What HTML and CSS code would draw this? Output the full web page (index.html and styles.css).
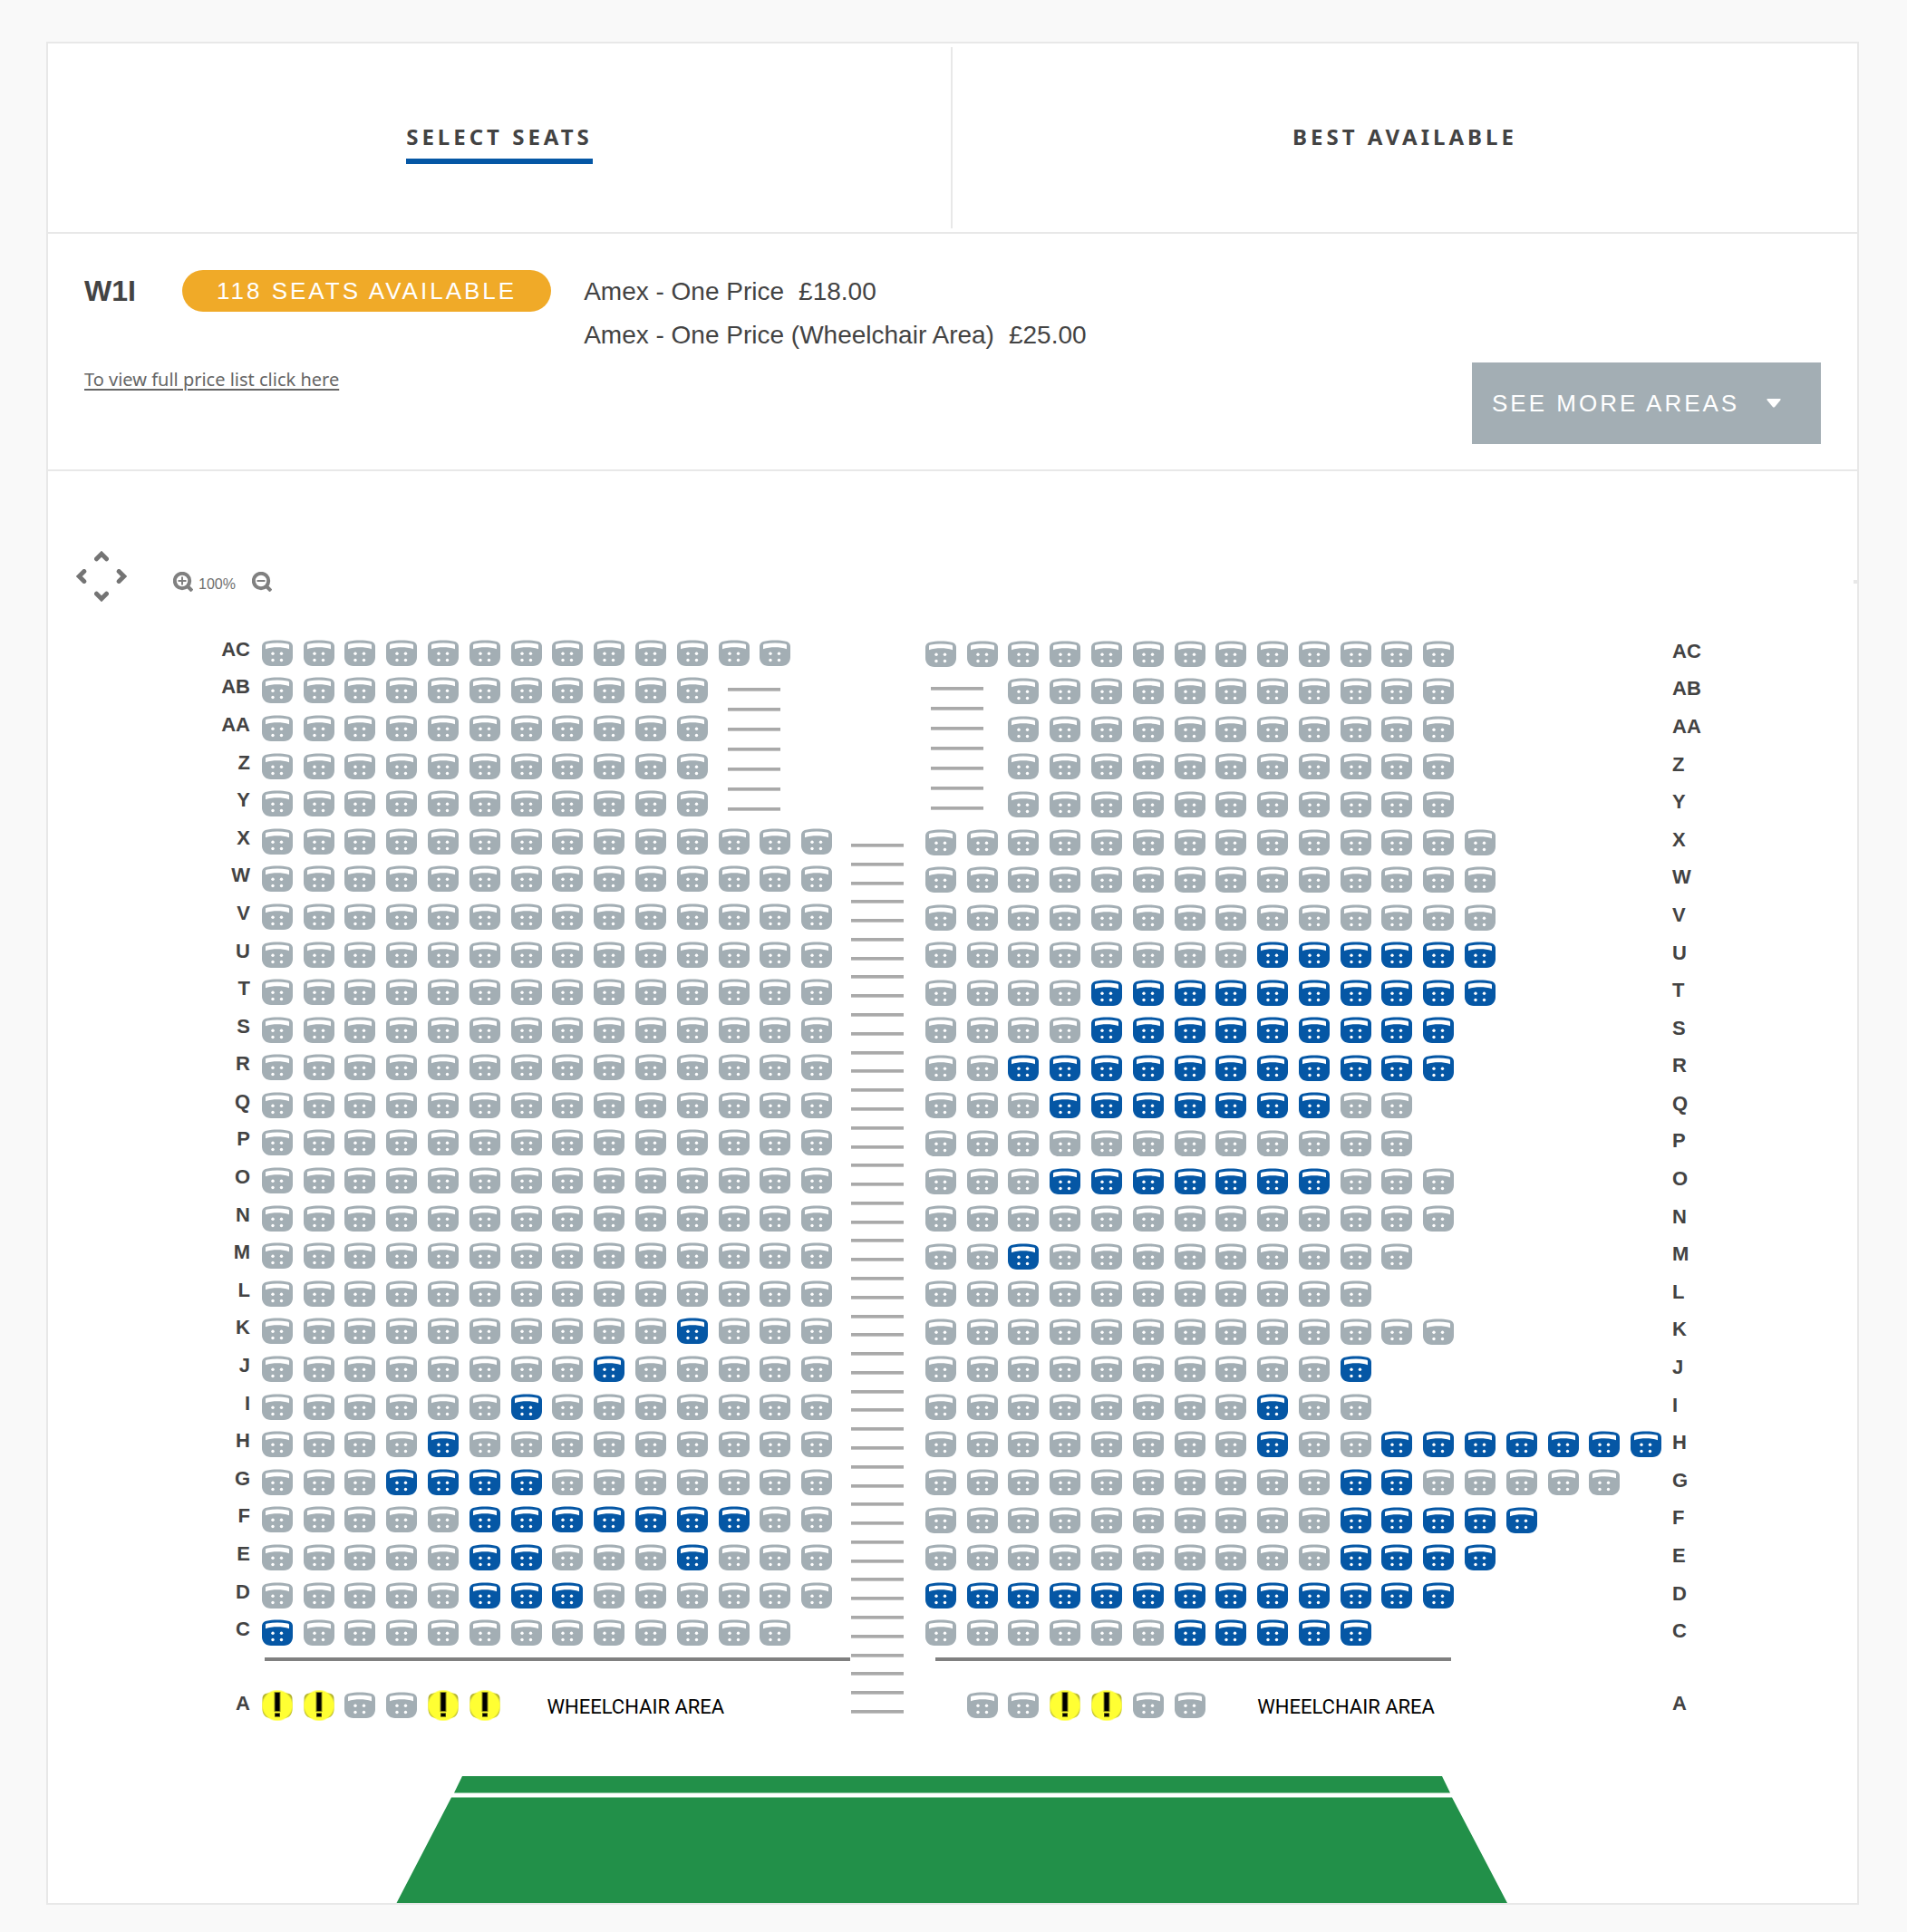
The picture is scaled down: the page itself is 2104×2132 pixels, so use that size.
FILE: index.html
```html
<!DOCTYPE html>
<html lang="en">
<head>
<meta charset="utf-8">
<title>Select seats – W1I</title>
<meta name="viewport" content="width=device-width, initial-scale=1">
<link rel="stylesheet" href="styles.css">
</head>
<body>
<svg class="defs" aria-hidden="true">
  <defs>
    <radialGradient id="glow" cx="50%" cy="50%" r="50%">
      <stop offset="0" stop-color="#ffff33"/>
      <stop offset="0.9" stop-color="#ffff33"/>
      <stop offset="1" stop-color="#ffff33" stop-opacity="0.2"/>
    </radialGradient>
    <symbol id="seat" viewBox="0 0 34 34">
      <path fill="currentColor" d="M0 10C0 6 2 4.700 5 3.800C12 1.900 22 1.900 29 3.800C32 4.700 34 6 34 10V21C34 27 30 31 24 31H10C4 31 0 27 0 21Z"/>
      <path fill="#fff" d="M4 8.300C4 7.300 4.500 6.900 6 6.600C13 5.100 21 5.100 28 6.600C29.500 6.900 30 7.300 30 8.300V12.200C22 9.700 12 9.700 4 12.200Z"/>
      <g fill="#fff"><circle cx="12" cy="17.300" r="1.700"/><circle cx="21.500" cy="17.300" r="1.700"/><circle cx="12" cy="24.500" r="1.700"/><circle cx="21.500" cy="24.500" r="1.700"/></g>
    </symbol>
    <symbol id="notice" viewBox="0 0 34 34">
      <path fill="#b4b430" d="M0.500 10C0.500 6 2 4.700 5 3.800C12 1.900 22 1.900 29 3.800C32 4.700 33.500 6 33.500 10V21C33.500 27 30 31 24 31H10C4 31 0.500 27 0.500 21Z"/>
      <ellipse fill="url(#glow)" cx="17" cy="17" rx="17.500" ry="17.500"/>
      <path fill="#8a8a1c" d="M13.500 2h7v22h-7zM14 25h6v5h-6z"/>
      <path fill="#000" d="M14.500 3h5v20h-5zM14.500 26h5v3h-5z"/>
    </symbol>
  </defs>
</svg>

<main class="card">
  <nav class="tabs" role="tablist">
    <button class="tab" type="button" role="tab" aria-selected="true"><span class="tab-text">SELECT SEATS</span></button>
    <button class="tab" type="button" role="tab" aria-selected="false"><span class="tab-text">BEST AVAILABLE</span></button>
  </nav>

  <section class="summary">
    <div class="facts">
      <h1 class="area">W1I</h1>
      <p class="pill">118 SEATS AVAILABLE</p>
      <ul class="prices">
        <li><span>Amex - One Price</span><span>£18.00</span></li>
        <li><span>Amex - One Price (Wheelchair Area)</span><span>£25.00</span></li>
      </ul>
    </div>
    <div class="actions">
      <a class="price-link" href="#prices">To view full price list click here</a>
      <button class="more" type="button">SEE MORE AREAS
        <svg width="16" height="10" viewBox="0 0 16 10" aria-hidden="true"><path fill="#fff" d="M1.500 0h13q2 0 .7 1.700L9.200 9Q8 10.200 6.800 9L.8 1.700Q-.5 0 1.500 0z"/></svg>
      </button>
    </div>
  </section>

  <section class="plan">
    <div class="tools">
      <div class="pan">
        <button class="pan-up" type="button" aria-label="Move up"><svg width="16" height="12" viewBox="0 0 16 12"><path d="M2.500 8.800L8 3.300l5.500 5.500"/></svg></button>
        <button class="pan-left" type="button" aria-label="Move left"><svg width="12" height="16" viewBox="0 0 12 16"><path d="M8.800 2.500L3.300 8l5.500 5.500"/></svg></button>
        <button class="pan-right" type="button" aria-label="Move right"><svg width="12" height="16" viewBox="0 0 12 16"><path d="M3.200 2.500L8.700 8l-5.500 5.500"/></svg></button>
        <button class="pan-down" type="button" aria-label="Move down"><svg width="16" height="12" viewBox="0 0 16 12"><path d="M2.500 3.200L8 8.700l5.500-5.500"/></svg></button>
      </div>
      <div class="zoom">
        <button type="button" aria-label="Zoom in"><svg width="22" height="22" viewBox="0 0 22 22"><circle cx="10" cy="10" r="8.200"/><path d="M15.500 15.500l5.500 5.500"/><path class="thin" d="M5.500 10h9M10 5.500v9"/></svg></button>
        <output class="level">100%</output>
        <button type="button" aria-label="Zoom out"><svg width="22" height="22" viewBox="0 0 22 22"><circle cx="10" cy="10" r="8.200"/><path d="M15.500 15.500l5.500 5.500"/><path class="thin" d="M5.500 10h9"/></svg></button>
      </div>
      <span class="handle"></span>
    </div>

    <div class="map">
      <div class="labels labels-left" data-labels></div>
      <div class="block block-left" data-block="left"></div>
      <div class="aisle" data-steps="47"></div>
      <div class="block block-right" data-block="right"></div>
      <div class="labels labels-right" data-labels></div>

      <div class="front-label front-label-left">A</div>
      <div class="front front-left"><hr class="rail"><div class="front-row" data-front="left"></div></div>
      <div class="front front-right"><hr class="rail"><div class="front-row" data-front="right"></div></div>
      <div class="front-label front-label-right">A</div>
    </div>

    <svg class="pitch" viewBox="0 0 1996 140" aria-label="Pitch" role="img">
      <path fill="#229049" d="M457 0H1538L1547 18.500H448ZM445 23.500H1549L1610 140H384.500Z"/>
    </svg>
  </section>
</main>
<script src="seats.js"></script>
</body>
</html>
```
FILE: styles.css
```css
* { box-sizing: border-box; }

body {
  margin: 0;
  padding: 46px 53px 30px 51px;
  background: #f9f9f9;
  color: #434343;
  font-family: "Liberation Sans", Arial, sans-serif;
}

button {
  margin: 0;
  padding: 0;
  border: 0;
  background: none;
  color: inherit;
  font: inherit;
  cursor: pointer;
}

svg { display: block; }
.defs { position: absolute; width: 0; height: 0; }

.card {
  border: 2px solid #e8e8e8;
  background: #fff;
}

/* Tabs */
.tabs {
  display: grid;
  grid-template-columns: 1fr 1fr;
  padding: 4px 0;
  border-bottom: 2px solid #e8e8e8;
}
.tab {
  height: 200px;
  padding-top: 12px;
  font: 700 24px/32px "Noto Sans", sans-serif;
  letter-spacing: 4px;
}
.tab:first-child { border-right: 2px solid #e8e8e8; }
.tab-text {
  display: inline-block;
  padding-bottom: 8px;
  border-bottom: 6px solid transparent;
}
.tab[aria-selected="true"] .tab-text { border-color: #0557a5; }

/* Area summary */
.summary {
  padding: 40px 40px 28px;
  border-bottom: 2px solid #e8e8e8;
}
.facts {
  display: flex;
  align-items: flex-start;
}
.area {
  width: 108px;
  margin: 0;
  font-size: 32px;
  line-height: 46px;
}
.pill {
  height: 46px;
  margin: 0 36px 0 0;
  padding: 0 38px;
  border-radius: 23px;
  background: #f0aa28;
  color: #fff;
  font-size: 26px;
  line-height: 46px;
  letter-spacing: 3px;
}
.prices {
  margin: 0;
  padding: 0;
  list-style: none;
  font-size: 28px;
  line-height: 48px;
}
.prices li {
  display: flex;
  gap: 16px;
}
.actions {
  display: flex;
  justify-content: space-between;
  align-items: flex-start;
  margin-top: 6px;
}
.price-link {
  padding-top: 5px;
  color: #666;
  font: 20px/28px "Noto Sans", sans-serif;
  text-underline-offset: 3px;
}
.more {
  display: flex;
  align-items: center;
  justify-content: space-between;
  width: 385px;
  height: 90px;
  padding: 0 44px 0 22px;
  background: #a3aeb4;
  color: #fff;
  font-size: 26px;
  letter-spacing: 3px;
}

/* Plan tools */
.plan { padding-top: 88px; }
.tools {
  display: flex;
  align-items: center;
  height: 56px;
  margin-bottom: 36px;
  padding-left: 31px;
}
.tools svg { fill: none; }
.pan {
  display: grid;
  grid-template: 12px 32px 12px / 12px 32px 12px;
  place-items: center;
  margin-right: 51px;
}
.pan-up { grid-area: 1 / 2; }
.pan-left { grid-area: 2 / 1; }
.pan-right { grid-area: 2 / 3; }
.pan-down { grid-area: 3 / 2; }
.pan svg {
  stroke: #747474;
  stroke-width: 5;
  stroke-linecap: round;
}
.zoom {
  display: flex;
  align-items: center;
  gap: 6px;
  padding-top: 12px;
}
.zoom svg { stroke: #808080; stroke-width: 4; }
.zoom .thin { stroke-width: 2; }
.level {
  width: 53px;
  padding-top: 6px;
  color: #707070;
  font-size: 16px;
  line-height: 20px;
}
.handle {
  width: 4px;
  height: 4px;
  margin: 12px 0 0 auto;
  background: #e8e8e8;
}

/* Seat map */
.map {
  display: grid;
  grid-template-columns: 230fr 641fr 91fr 824fr 210fr;
}
.labels {
  display: grid;
  grid-template-rows: repeat(27, 1fr);
  align-items: center;
  font-size: 22px;
  font-weight: 700;
  line-height: 24px;
}
.labels-left { padding-right: 7px; text-align: right; }
.labels-left span { padding-bottom: 8px; }
.labels-right { padding-left: 6px; }
.labels-right span { padding-bottom: 4px; }

.block,
.front-row {
  display: grid;
  place-items: center;
}
.block { grid-template-rows: repeat(27, 1fr); }
.block-left { aspect-ratio: 641 / 1123; }
.block-left,
.front-left .front-row { grid-template-columns: repeat(14, 1fr); }
.block-right,
.front-right .front-row { grid-template-columns: repeat(18, 1fr); }
.block-right { padding-top: 1px; }

.seat { color: #0557a5; }
.seat:disabled { color: #a3aeb4; cursor: default; }
.seat svg { width: 34px; height: 34px; }

.steps {
  display: flex;
  flex-direction: column;
  gap: 18px;
  align-self: start;
}
.steps i,
.aisle i {
  width: 58px;
  height: 4px;
  background: #a9a9a9;
  border-bottom: 1px solid #c4c4c4;
}
.steps-left {
  grid-area: 2 / 12 / 6 / 14;
  padding-top: 17px;
}
.steps-right {
  grid-area: 2 / 1 / 6 / 3;
  justify-self: start;
  padding: 15px 0 0 12px;
}
.aisle {
  grid-column: 3;
  grid-row: 1 / 3;
  display: flex;
  flex-direction: column;
  justify-content: space-between;
  padding: 231px 0 12px 15px;
}

/* Front row */
.front-label {
  grid-row: 2;
  padding-top: 45px;
  font-size: 22px;
  font-weight: 700;
  line-height: 24px;
}
.front-label-left { padding-right: 7px; text-align: right; }
.front-label-right { grid-column: 5; padding-left: 6px; }
.front-left { grid-column: 2; grid-row: 2; }
.front-right { grid-column: 4; grid-row: 2; }
.rail {
  height: 4px;
  margin: 6px 0 28px;
  border: 0;
  background: #808080;
}
.front-left .rail { margin-left: 9px; margin-right: -14px; }
.front-right .rail { width: 69%; margin-left: 17px; }
.front-row { height: 42px; }
.front-note {
  justify-self: start;
  margin: 0;
  padding-top: 3px;
  color: #000;
  font: 22px/28px Roboto, sans-serif;
  white-space: nowrap;
}
.front-left .front-note { grid-column: 8 / 14; }
.front-right .front-note { grid-column: 9 / 15; padding-left: 6px; }

.pitch {
  width: 100%;
  margin-top: 57px;
}
```
FILE: seats.js
```js
// x = taken, o = available, ! = restricted, . = no seat
const rows = [
  ["AC", "xxxxxxxxxxxxx", "xxxxxxxxxxxxx"],
  ["AB", "xxxxxxxxxxx", "..xxxxxxxxxxx"],
  ["AA", "xxxxxxxxxxx", "..xxxxxxxxxxx"],
  ["Z", "xxxxxxxxxxx", "..xxxxxxxxxxx"],
  ["Y", "xxxxxxxxxxx", "..xxxxxxxxxxx"],
  ["X", "xxxxxxxxxxxxxx", "xxxxxxxxxxxxxx"],
  ["W", "xxxxxxxxxxxxxx", "xxxxxxxxxxxxxx"],
  ["V", "xxxxxxxxxxxxxx", "xxxxxxxxxxxxxx"],
  ["U", "xxxxxxxxxxxxxx", "xxxxxxxxoooooo"],
  ["T", "xxxxxxxxxxxxxx", "xxxxoooooooooo"],
  ["S", "xxxxxxxxxxxxxx", "xxxxooooooooo"],
  ["R", "xxxxxxxxxxxxxx", "xxooooooooooo"],
  ["Q", "xxxxxxxxxxxxxx", "xxxoooooooxx"],
  ["P", "xxxxxxxxxxxxxx", "xxxxxxxxxxxx"],
  ["O", "xxxxxxxxxxxxxx", "xxxoooooooxxx"],
  ["N", "xxxxxxxxxxxxxx", "xxxxxxxxxxxxx"],
  ["M", "xxxxxxxxxxxxxx", "xxoxxxxxxxxx"],
  ["L", "xxxxxxxxxxxxxx", "xxxxxxxxxxx"],
  ["K", "xxxxxxxxxxoxxx", "xxxxxxxxxxxxx"],
  ["J", "xxxxxxxxoxxxxx", "xxxxxxxxxxo"],
  ["I", "xxxxxxoxxxxxxx", "xxxxxxxxoxx"],
  ["H", "xxxxoxxxxxxxxx", "xxxxxxxxoxxooooooo"],
  ["G", "xxxooooxxxxxxx", "xxxxxxxxxxooxxxxx"],
  ["F", "xxxxxoooooooxx", "xxxxxxxxxxooooo"],
  ["E", "xxxxxooxxxoxxx", "xxxxxxxxxxoooo"],
  ["D", "xxxxxoooxxxxxx", "ooooooooooooo"],
  ["C", "oxxxxxxxxxxxx", "xxxxxxooooo"]
];
const front = { left: "!!xx!!", right: ".xx!!xx" };

function seats(line, label, rowIndex) {
  return [...line].map((kind, i) => {
    if (kind === ".") return "";
    const icon = kind === "!" ? "notice" : "seat";
    const off = kind === "x" ? " disabled" : "";
    return `<button class="seat" type="button" aria-label="Row ${label}, seat ${i + 1}"${off} style="grid-area:${rowIndex}/${i + 1}"><svg><use href="#${icon}"/></svg></button>`;
  }).join("");
}

const lines = n => "<i></i>".repeat(n);

document.querySelectorAll("[data-labels]").forEach(el => {
  el.innerHTML = rows.map(r => `<span>${r[0]}</span>`).join("");
});
document.querySelectorAll("[data-block]").forEach(el => {
  const side = el.dataset.block;
  const index = side === "left" ? 1 : 2;
  el.innerHTML = rows.map((r, i) => seats(r[index], r[0], i + 1)).join("") +
    `<div class="steps steps-${side}">${lines(7)}</div>`;
});
document.querySelectorAll("[data-front]").forEach(el => {
  el.innerHTML = seats(front[el.dataset.front], "A", 1) + '<p class="front-note">WHEELCHAIR AREA</p>';
});
document.querySelectorAll("[data-steps]").forEach(el => {
  el.innerHTML = lines(Number(el.dataset.steps));
});
```
